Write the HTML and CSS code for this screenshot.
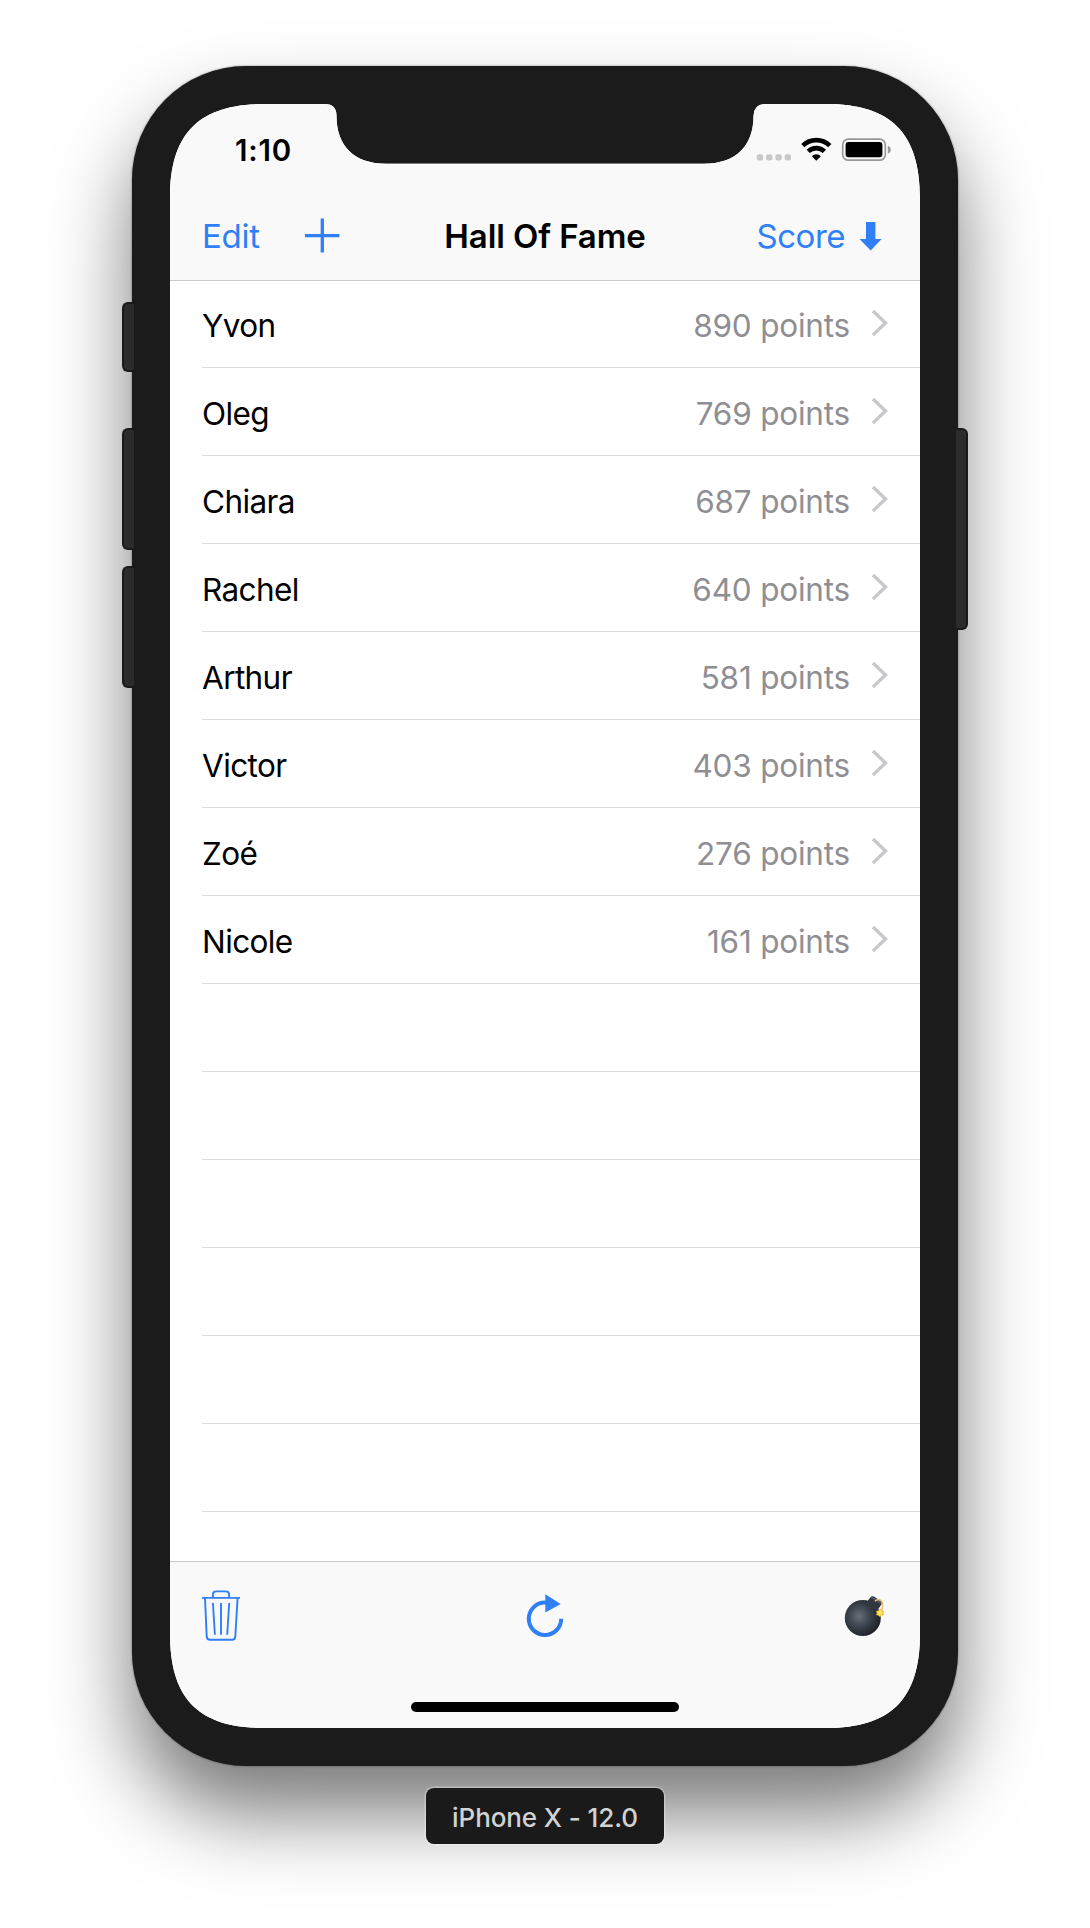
FILE: index.html
```html
<!DOCTYPE html>
<html lang="en">
<head>
<meta charset="utf-8">
<title>Hall Of Fame</title>
<link rel="stylesheet" href="styles.css">
</head>
<body>
<main class="phone">
  <span class="key key-mute"></span>
  <span class="key key-up"></span>
  <span class="key key-down"></span>
  <span class="key key-power"></span>
  <div class="screen">
    <header class="header">
      <div class="status">
        <span class="time">1:10</span>
        <svg class="status-icons" width="136" height="26" viewBox="0 0 136 26">
          <g fill="#c8c8c8">
            <rect x="0.8" y="17.2" width="6.3" height="6.3" rx="2"/>
            <rect x="10.1" y="17.2" width="6.3" height="6.3" rx="2"/>
            <rect x="19.4" y="17.2" width="6.3" height="6.3" rx="2"/>
            <rect x="28.7" y="17.2" width="6.3" height="6.3" rx="2"/>
          </g>
          <g fill="none" stroke="#000" stroke-width="4.6">
            <path d="M46.800 8.700a19.200 19.200 0 0 1 27 0"/>
            <path d="M52.200 14.400a11.600 11.600 0 0 1 16.200 0"/>
          </g>
          <path d="M60.300 23.800l-4.500-4.600a6.400 6.400 0 0 1 9 0z"/>
          <rect x="86.700" y="2.200" width="42.600" height="21" rx="5.600" fill="none" stroke="#999" stroke-width="1.700"/>
          <rect x="89.600" y="5.100" width="36.800" height="15.200" rx="3"/>
          <path d="M131.800 8.700q3 1.200 3 4t-3 4z" fill="#999"/>
        </svg>
      </div>
      <nav class="nav">
        <div class="nav-left">
          <span class="edit">Edit</span>
          <svg width="36" height="36" viewBox="0 0 36 36"><path d="M18.300 .6v34M1 17.600h34.400" stroke="#2f7ff7" stroke-width="3.300"/></svg>
        </div>
        <h1 class="title">Hall Of Fame</h1>
        <div class="nav-right">
          <span class="score">Score</span>
          <svg width="24" height="30" viewBox="0 0 24 30"><path d="M7 1h9.400v17h6.200L11.700 29.400.5 18H7z" fill="#2f7ff7"/></svg>
        </div>
      </nav>
    </header>
    <ul class="list">
      <li class="row"><span class="name">Yvon</span><span class="points">890 points</span><svg class="chevron" viewBox="0 0 18 28"><path d="M2 2l12.500 12L2 26"/></svg></li>
      <li class="row"><span class="name">Oleg</span><span class="points">769 points</span><svg class="chevron" viewBox="0 0 18 28"><path d="M2 2l12.500 12L2 26"/></svg></li>
      <li class="row"><span class="name">Chiara</span><span class="points">687 points</span><svg class="chevron" viewBox="0 0 18 28"><path d="M2 2l12.500 12L2 26"/></svg></li>
      <li class="row"><span class="name">Rachel</span><span class="points">640 points</span><svg class="chevron" viewBox="0 0 18 28"><path d="M2 2l12.500 12L2 26"/></svg></li>
      <li class="row"><span class="name">Arthur</span><span class="points">581 points</span><svg class="chevron" viewBox="0 0 18 28"><path d="M2 2l12.500 12L2 26"/></svg></li>
      <li class="row"><span class="name">Victor</span><span class="points">403 points</span><svg class="chevron" viewBox="0 0 18 28"><path d="M2 2l12.500 12L2 26"/></svg></li>
      <li class="row"><span class="name">Zoé</span><span class="points">276 points</span><svg class="chevron" viewBox="0 0 18 28"><path d="M2 2l12.500 12L2 26"/></svg></li>
      <li class="row"><span class="name">Nicole</span><span class="points">161 points</span><svg class="chevron" viewBox="0 0 18 28"><path d="M2 2l12.500 12L2 26"/></svg></li>
      <li class="row"></li>
      <li class="row"></li>
      <li class="row"></li>
      <li class="row"></li>
      <li class="row"></li>
      <li class="row"></li>
    </ul>
    <footer class="footer">
      <div class="tools">
        <svg width="38" height="52" viewBox="0 0 38 52" fill="none" stroke="#2f7ff7" stroke-width="1.900">
          <path d="M0 7.900h38M10.900 7.500V4.600q0-3.200 3.200-3.200h9.800q3.200 0 3.200 3.200v2.900M3 8l1.700 38.400q.2 3.400 3.400 3.400h21.800q3.200 0 3.400-3.400L35.600 8M10.900 13l2 31.800M19 13v31.800M27.200 13l-2 31.800"/>
        </svg>
        <svg width="38" height="52" viewBox="0 0 38 52">
          <path d="M20 12.600H19A16.200 16.200 0 1 0 35.200 28.800" fill="none" stroke="#2f7ff7" stroke-width="4"/>
          <path d="M19.300 4.300v18.200l15.400-8.600z" fill="#2f7ff7"/>
        </svg>
        <svg class="bomb" width="44" height="52" viewBox="0 0 44 52">
          <defs>
            <radialGradient id="ball" cx=".4" cy=".45" r=".6">
              <stop offset="0" stop-color="#68707a"/>
              <stop offset=".4" stop-color="#444b54"/>
              <stop offset=".8" stop-color="#292e35"/>
              <stop offset="1" stop-color="#202226"/>
            </radialGradient>
            <radialGradient id="spark">
              <stop offset="0" stop-color="#fff7b8"/>
              <stop offset=".55" stop-color="#ffd43f"/>
              <stop offset="1" stop-color="#f3ac25"/>
            </radialGradient>
          </defs>
          <circle cx="22.800" cy="28" r="18" fill="url(#ball)"/>
          <path d="M26.500 12.200l4-5q1.500-1.500 3.500-.6l7 5q1.200 1.200.4 2.800l-4.500 6.600q-6-1.500-10.400-8.800z" fill="#30363f"/>
          <path d="M31 7.400q4 .5 9.500 5.500" fill="none" stroke="#4a5563" stroke-width="2"/>
          <path d="M34.800 11.200q4-3.600 6.900 0 2.200 4-.6 11" fill="none" stroke="#e9bd76" stroke-width="1.500"/>
          <path d="M40.300 18.500l1.400 2.100 2.200.3-.5 2.200.4 2-2.200.5-1.700 1.500-1.600-1.600-2.200-.5.600-2.100-.7-2 2.400-.3z" fill="url(#spark)"/>
        </svg>
      </div>
      <div class="home"></div>
    </footer>
  </div>
</main>
<div class="label">iPhone X - 12.0</div>
</body>
</html>
```
FILE: styles.css
```css
* { box-sizing: border-box; }

body {
  margin: 0;
  height: 1928px;
  padding-top: 66px;
  display: flex;
  flex-direction: column;
  align-items: center;
  background: #fff;
  overflow: hidden;
  font-family: Inter, "Liberation Sans", sans-serif;
}

svg { display: block; flex: none; }

.phone {
  position: relative;
  flex: none;
  width: 826px;
  height: 1700px;
  padding: 38px;
  border-radius: 114px;
  background: #1b1b1b;
  box-shadow: 0 0 2px rgba(0, 0, 0, .5), 0 48px 80px rgba(0, 0, 0, .52);
}

.key {
  position: absolute;
  left: -10px;
  width: 12px;
  background: #2b2b2b;
  border: 2px solid #1a1a1a;
  border-right: 0;
  border-radius: 6px 0 0 6px;
}
.key-mute { top: 236px; height: 70px; }
.key-up { top: 362px; height: 122px; }
.key-down { top: 500px; height: 122px; }
.key-power {
  left: auto;
  right: -10px;
  top: 362px;
  height: 202px;
  border: 2px solid #1a1a1a;
  border-left: 0;
  border-radius: 0 6px 6px 0;
}

/* Rounded display outline with the sensor notch cut out of the top edge. */
.screen {
  height: 1624px;
  display: flex;
  flex-direction: column;
  background: #fff;
  clip-path: path("M0 94C0 29 29 0 94 0H155Q166.500 0 166.500 12C166.500 42 184 59.700 216 59.700H534C566 59.700 583.500 42 583.500 12Q584 0 595 0H656C721 0 750 29 750 94V1530C750 1595 721 1624 656 1624H94C29 1624 0 1595 0 1530Z");
}

.header {
  height: 177px;
  flex: none;
  background: #f9f9f9;
  border-bottom: 1px solid #cacaca;
}

.status {
  height: 88px;
  padding: 33px 28px 0 65px;
  display: flex;
  justify-content: space-between;
  align-items: flex-start;
}
.time { font-size: 29.500px; line-height: 27px; font-weight: 600; letter-spacing: .8px; }

.nav {
  height: 88px;
  padding: 0 32px;
  display: grid;
  grid-template-columns: 1fr auto 1fr;
  align-items: center;
  color: #2f7ff7;
  font-size: 33px;
}
.nav-left, .nav-right { display: flex; align-items: center; }
.nav-left { gap: 44px; }
.edit { letter-spacing: -.3px; }
.score { letter-spacing: -.5px; }
.nav-right { gap: 14px; justify-content: flex-end; padding-right: 5px; }
.title { margin: 0; color: #000; font-size: 33px; font-weight: 600; letter-spacing: -.1px; }

.list { flex: 1; min-height: 0; overflow: hidden; margin: 0; padding: 0 0 0 32px; list-style: none; }
.row {
  height: 88px;
  padding-right: 31px;
  display: flex;
  align-items: center;
  border-bottom: 1px solid #dcdcde;
  font-size: 31.500px;
}
.row:first-child { height: 87px; }
.name { flex: 1; letter-spacing: -.6px; }
.points { color: #8e8e93; letter-spacing: -.2px; }
.name, .points { padding-top: 3px; }
.row:first-child > span { padding-top: 2px; }
.chevron { width: 18px; height: 28px; margin: 0 0 2px 21px; fill: none; stroke: #c7c7cc; stroke-width: 3.300; }

.footer {
  height: 167px;
  flex: none;
  background: #f9f9f9;
  border-top: 1px solid #cacaca;
}
.tools {
  height: 140px;
  padding: 28px 32px 0;
  display: grid;
  grid-template-columns: 1fr auto 1fr;
}
.bomb { justify-self: end; margin-right: 4px; }
.home { width: 268px; height: 10px; margin: 0 auto; border-radius: 5px; background: #000; }

.label {
  position: relative;
  flex: none;
  width: 238px;
  height: 56px;
  margin-top: 22px;
  border-radius: 8px;
  background: #1a1a1a;
  box-shadow: 0 0 0 1.500px rgba(255, 255, 255, .3);
  color: #d2d2d2;
  font-size: 26px;
  font-weight: 500;
  line-height: 59px;
  letter-spacing: -.1px;
  text-align: center;
}
```
